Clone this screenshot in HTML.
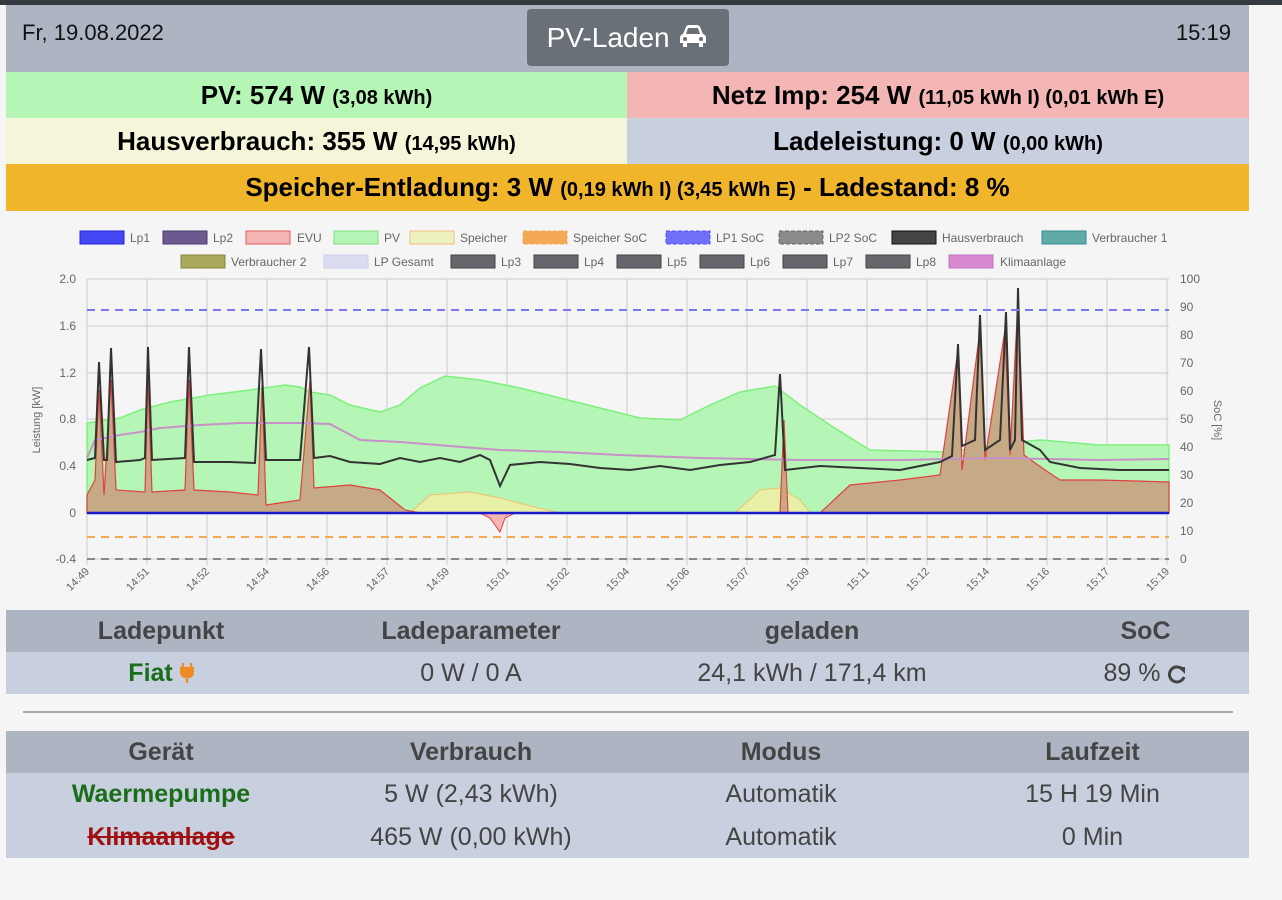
<!DOCTYPE html>
<html><head><meta charset="utf-8"><style>
*{margin:0;padding:0;box-sizing:border-box}
body{width:1282px;height:900px;background:#f5f5f5;font-family:"Liberation Sans",sans-serif;position:relative;overflow:hidden}
.topbar{position:absolute;left:0;top:0;width:1282px;height:5px;background:#343a40}
.hdr{position:absolute;left:6px;top:5px;width:1243px;height:67px;background:#adb5c2}
.date{position:absolute;left:16px;top:15px;font-size:22px;color:#111}
.time{position:absolute;right:18px;top:15px;font-size:22px;color:#111}
.btn{position:absolute;left:521px;top:4px;width:202px;height:57px;background:#6a7078;border-radius:4px;color:#fff;font-size:28px;line-height:57px;text-align:center}
.row{position:absolute;height:46px;font-weight:bold;font-size:26px;text-align:center;line-height:46px;color:#000}
.row small{font-size:20px}
table{position:absolute;left:6px;width:1243px;border-collapse:collapse;text-align:center;font-size:25px;color:#444;table-layout:fixed}
th{background:#adb5c2;height:42px;font-weight:bold;color:#444}
td{background:#c8d0df;height:42px}
</style></head><body>
<div class="topbar"></div>
<div class="hdr">
<div class="date">Fr, 19.08.2022</div>
<div class="btn">PV-Laden <svg width="32" height="24" viewBox="0 0 32 24" style="vertical-align:-1px"><path d="M6 10 L9 3 Q10 1 12 1 H20 Q22 1 23 3 L26 10 Q29 11 29 14 V19 H26 V23 H22 V19 H10 V23 H6 V19 H3 V14 Q3 11 6 10Z M9 10 H23 L21 4 H11Z" fill="#fff" fill-rule="evenodd"/><circle cx="8" cy="15" r="2" fill="#6a7078"/><circle cx="24" cy="15" r="2" fill="#6a7078"/></svg></div>
<div class="time">15:19</div>
</div>
<div class="row" style="left:6px;top:72px;width:621px;background:#b5f5b5">PV: 574 W <small>(3,08 kWh)</small></div>
<div class="row" style="left:627px;top:72px;width:622px;background:#f4b6b5">Netz Imp: 254 W <small>(11,05 kWh I) (0,01 kWh E)</small></div>
<div class="row" style="left:6px;top:118px;width:621px;background:#f5f5d9">Hausverbrauch: 355 W <small>(14,95 kWh)</small></div>
<div class="row" style="left:627px;top:118px;width:622px;background:#c8d0df">Ladeleistung: 0 W <small>(0,00 kWh)</small></div>
<div class="row" style="left:6px;top:164px;width:1243px;height:47px;background:#f0b52b">Speicher-Entladung: 3 W <small>(0,19 kWh I) (3,45 kWh E)</small> - Ladestand: 8 %</div>

<svg style="position:absolute;left:0;top:220px" width="1282" height="390" viewBox="0 220 1282 390" font-family="Liberation Sans" font-size="12" fill="#666">
<g font-size="12">
<rect x="80" y="231" width="44" height="13" fill="#4448f4" stroke="#2222dd"/><text x="130" y="242">Lp1</text>
<rect x="163" y="231" width="44" height="13" fill="#6a5a90" stroke="#4a3a70"/><text x="213" y="242">Lp2</text>
<rect x="246" y="231" width="44" height="13" fill="#f4b6b5" stroke="#e06060"/><text x="297" y="242">EVU</text>
<rect x="334" y="231" width="44" height="13" fill="#b5f5b5" stroke="#80e080"/><text x="384" y="242">PV</text>
<rect x="410" y="231" width="44" height="13" fill="#eef2c0" stroke="#f0c080"/><text x="460" y="242">Speicher</text>
<rect x="523" y="231" width="44" height="13" fill="#f4aa55" stroke="#f4aa55" stroke-dasharray="4 2"/><text x="573" y="242">Speicher SoC</text>
<rect x="666" y="231" width="44" height="13" fill="#7070f8" stroke="#5050f8" stroke-dasharray="4 2"/><text x="716" y="242">LP1 SoC</text>
<rect x="779" y="231" width="44" height="13" fill="#8a8a8a" stroke="#666" stroke-dasharray="4 2"/><text x="829" y="242">LP2 SoC</text>
<rect x="892" y="231" width="44" height="13" fill="#444" stroke="#111"/><text x="942" y="242">Hausverbrauch</text>
<rect x="1042" y="231" width="44" height="13" fill="#60aaa8" stroke="#309090"/><text x="1092" y="242">Verbraucher 1</text>
<rect x="181" y="255" width="44" height="13" fill="#aaa85a" stroke="#88883a"/><text x="231" y="266">Verbraucher 2</text>
<rect x="324" y="255" width="44" height="13" fill="#dcdcf0" stroke="#ccccee"/><text x="374" y="266">LP Gesamt</text>
<rect x="451" y="255" width="44" height="13" fill="#66666c" stroke="#444"/><text x="501" y="266">Lp3</text>
<rect x="534" y="255" width="44" height="13" fill="#66666c" stroke="#444"/><text x="584" y="266">Lp4</text>
<rect x="617" y="255" width="44" height="13" fill="#66666c" stroke="#444"/><text x="667" y="266">Lp5</text>
<rect x="700" y="255" width="44" height="13" fill="#66666c" stroke="#444"/><text x="750" y="266">Lp6</text>
<rect x="783" y="255" width="44" height="13" fill="#66666c" stroke="#444"/><text x="833" y="266">Lp7</text>
<rect x="866" y="255" width="44" height="13" fill="#66666c" stroke="#444"/><text x="916" y="266">Lp8</text>
<rect x="949" y="255" width="44" height="13" fill="#d88ad0" stroke="#c070c0"/><text x="1000" y="266">Klimaanlage</text>
</g>
<g stroke="#ccc" stroke-width="1">
<path d="M87 279H1169M87 326H1169M87 373H1169M87 419H1169M87 466H1169M87 513H1169M87 559H1169"/>
<path d="M87 279V565M147 279V565M207 279V565M267 279V565M327 279V565M387 279V565M447 279V565M507 279V565M567 279V565M627 279V565M687 279V565M747 279V565M807 279V565M867 279V565M927 279V565M987 279V565M1047 279V565M1107 279V565M1167 279V565"/>
</g>
<g text-anchor="end"><text x="76" y="283">2.0</text><text x="76" y="330">1.6</text><text x="76" y="377">1.2</text><text x="76" y="423">0.8</text><text x="76" y="470">0.4</text><text x="76" y="517">0</text><text x="76" y="563">-0.4</text></g>
<g><text x="1180" y="283">100</text><text x="1180" y="311">90</text><text x="1180" y="339">80</text><text x="1180" y="367">70</text><text x="1180" y="395">60</text><text x="1180" y="423">50</text><text x="1180" y="451">40</text><text x="1180" y="479">30</text><text x="1180" y="507">20</text><text x="1180" y="535">10</text><text x="1180" y="563">0</text></g>
<text transform="translate(40 420) rotate(-90)" text-anchor="middle" font-size="11">Leistung [kW]</text>
<text transform="translate(1214 420) rotate(90)" text-anchor="middle" font-size="11">SoC [%]</text>
<g text-anchor="end" font-size="11">
<text transform="translate(90 572) rotate(-45)">14:49</text><text transform="translate(150 572) rotate(-45)">14:51</text><text transform="translate(210 572) rotate(-45)">14:52</text><text transform="translate(270 572) rotate(-45)">14:54</text><text transform="translate(330 572) rotate(-45)">14:56</text><text transform="translate(390 572) rotate(-45)">14:57</text><text transform="translate(450 572) rotate(-45)">14:59</text><text transform="translate(510 572) rotate(-45)">15:01</text><text transform="translate(570 572) rotate(-45)">15:02</text><text transform="translate(630 572) rotate(-45)">15:04</text><text transform="translate(690 572) rotate(-45)">15:06</text><text transform="translate(750 572) rotate(-45)">15:07</text><text transform="translate(810 572) rotate(-45)">15:09</text><text transform="translate(870 572) rotate(-45)">15:11</text><text transform="translate(930 572) rotate(-45)">15:12</text><text transform="translate(990 572) rotate(-45)">15:14</text><text transform="translate(1050 572) rotate(-45)">15:16</text><text transform="translate(1110 572) rotate(-45)">15:17</text><text transform="translate(1170 572) rotate(-45)">15:19</text>
</g>
<path d="M87 513V423L120 418L140 410L170 402L210 395L250 390L285 385L300 387L310 392L330 395L350 405L380 412L400 405L420 388L445 376L480 380L520 388L560 398L600 408L640 418L680 420L710 405L740 392L775 386L800 405L830 425L870 450L950 452L990 445L1040 440L1100 445L1169 445V513Z" fill="#b5f5b5" stroke="#7ef07e" stroke-width="1.5"/>
<path d="M410 513L430 495L470 492L500 498L530 506L560 513Z M735 513L760 490L780 488L800 500L810 513Z" fill="#e8f0a8" stroke="#f0c070" stroke-width="1"/>
<path d="M87 513V495L95 480L99 390L104 495L111 380L116 490L145 492L148 380L152 492L185 490L189 380L194 490L230 492L258 495L262 385L266 505L300 500L310 380L314 488L350 485L380 490L405 510L420 513L780 513L784 420L788 513L820 513L850 485L900 480L940 475L958 350L962 470L980 330L985 460L1005 330L1010 455L1018 300L1024 455L1045 470L1060 480L1100 480L1169 482V513Z" fill="#c6aa86" stroke="#e04040" stroke-width="1.2"/>
<path d="M480 513L490 518L500 532L505 518L515 513Z" fill="#f4b6b5" stroke="#e04040"/>
<path d="M87 458L95 440L120 435L140 432L160 428L200 425L240 423L300 423L330 424L345 432L360 440L400 442L450 446L500 450L560 452L620 455L700 458L800 460L900 460L1000 458L1100 460L1169 459" fill="none" stroke="#c890c8" stroke-width="2"/>
<path d="M87 460L95 458L99 362L104 460L107 460L111 348L116 462L140 460L145 458L148 347L152 460L185 458L189 347L194 462L230 462L255 463L261 349L266 460L300 460L309 347L314 458L330 456L350 462L380 464L400 458L420 462L440 458L460 462L480 455L490 460L500 486L510 465L540 462L570 464L600 468L630 470L660 466L690 470L720 465L750 462L775 455L780 374L785 470L820 466L860 468L900 470L940 462L952 456L958 344L962 446L975 440L980 315L985 450L1000 440L1006 312L1010 450L1015 440L1018 288L1022 440L1040 450L1050 462L1080 468L1120 470L1150 470L1169 470" fill="none" stroke="#333" stroke-width="2"/>
<path d="M87 513H1169" stroke="#1a1acc" stroke-width="2.5"/>
<path d="M87 310H1169" stroke="#7777f5" stroke-width="2" stroke-dasharray="8 6"/>
<path d="M87 537H1169" stroke="#f4aa55" stroke-width="2" stroke-dasharray="8 6"/>
<path d="M87 559H1169" stroke="#888" stroke-width="2" stroke-dasharray="8 6"/>
</svg>

<table style="top:610px">
<tr><th style="width:310px">Ladepunkt</th><th style="width:310px">Ladeparameter</th><th style="width:372px">geladen</th><th style="padding-left:44px">SoC</th></tr>
<tr><td style="color:#1a6e1a;font-weight:bold">Fiat <svg width="14" height="22" viewBox="0 0 14 22" style="vertical-align:-3px"><path d="M3 1V6M11 1V6M1 6H13V10Q13 15 7 15Q1 15 1 10Z M7 15V21" stroke="#f08a24" stroke-width="2.2" fill="#f08a24"/></svg></td><td>0 W / 0 A</td><td>24,1 kWh / 171,4 km</td><td style="padding-left:44px">89 % <svg width="20" height="20" viewBox="0 0 20 20" style="vertical-align:-3px"><path d="M16 6A7.5 7.5 0 1 0 17 13" stroke="#444" stroke-width="3" fill="none"/><path d="M11 3H18V10Z" fill="#444"/></svg></td></tr>
</table>
<div style="position:absolute;left:23px;top:711px;width:1210px;height:2px;background:#aaa"></div>
<table style="top:731px">
<tr><th style="width:310px">Gerät</th><th style="width:310px">Verbrauch</th><th style="width:310px">Modus</th><th>Laufzeit</th></tr>
<tr><td style="color:#1a6e1a;font-weight:bold;height:43px">Waermepumpe</td><td>5 W (2,43 kWh)</td><td>Automatik</td><td>15 H 19 Min</td></tr>
<tr><td style="color:#a01010;font-weight:bold;text-decoration:line-through">Klimaanlage</td><td>465 W (0,00 kWh)</td><td>Automatik</td><td>0 Min</td></tr>
</table>
</body></html>
